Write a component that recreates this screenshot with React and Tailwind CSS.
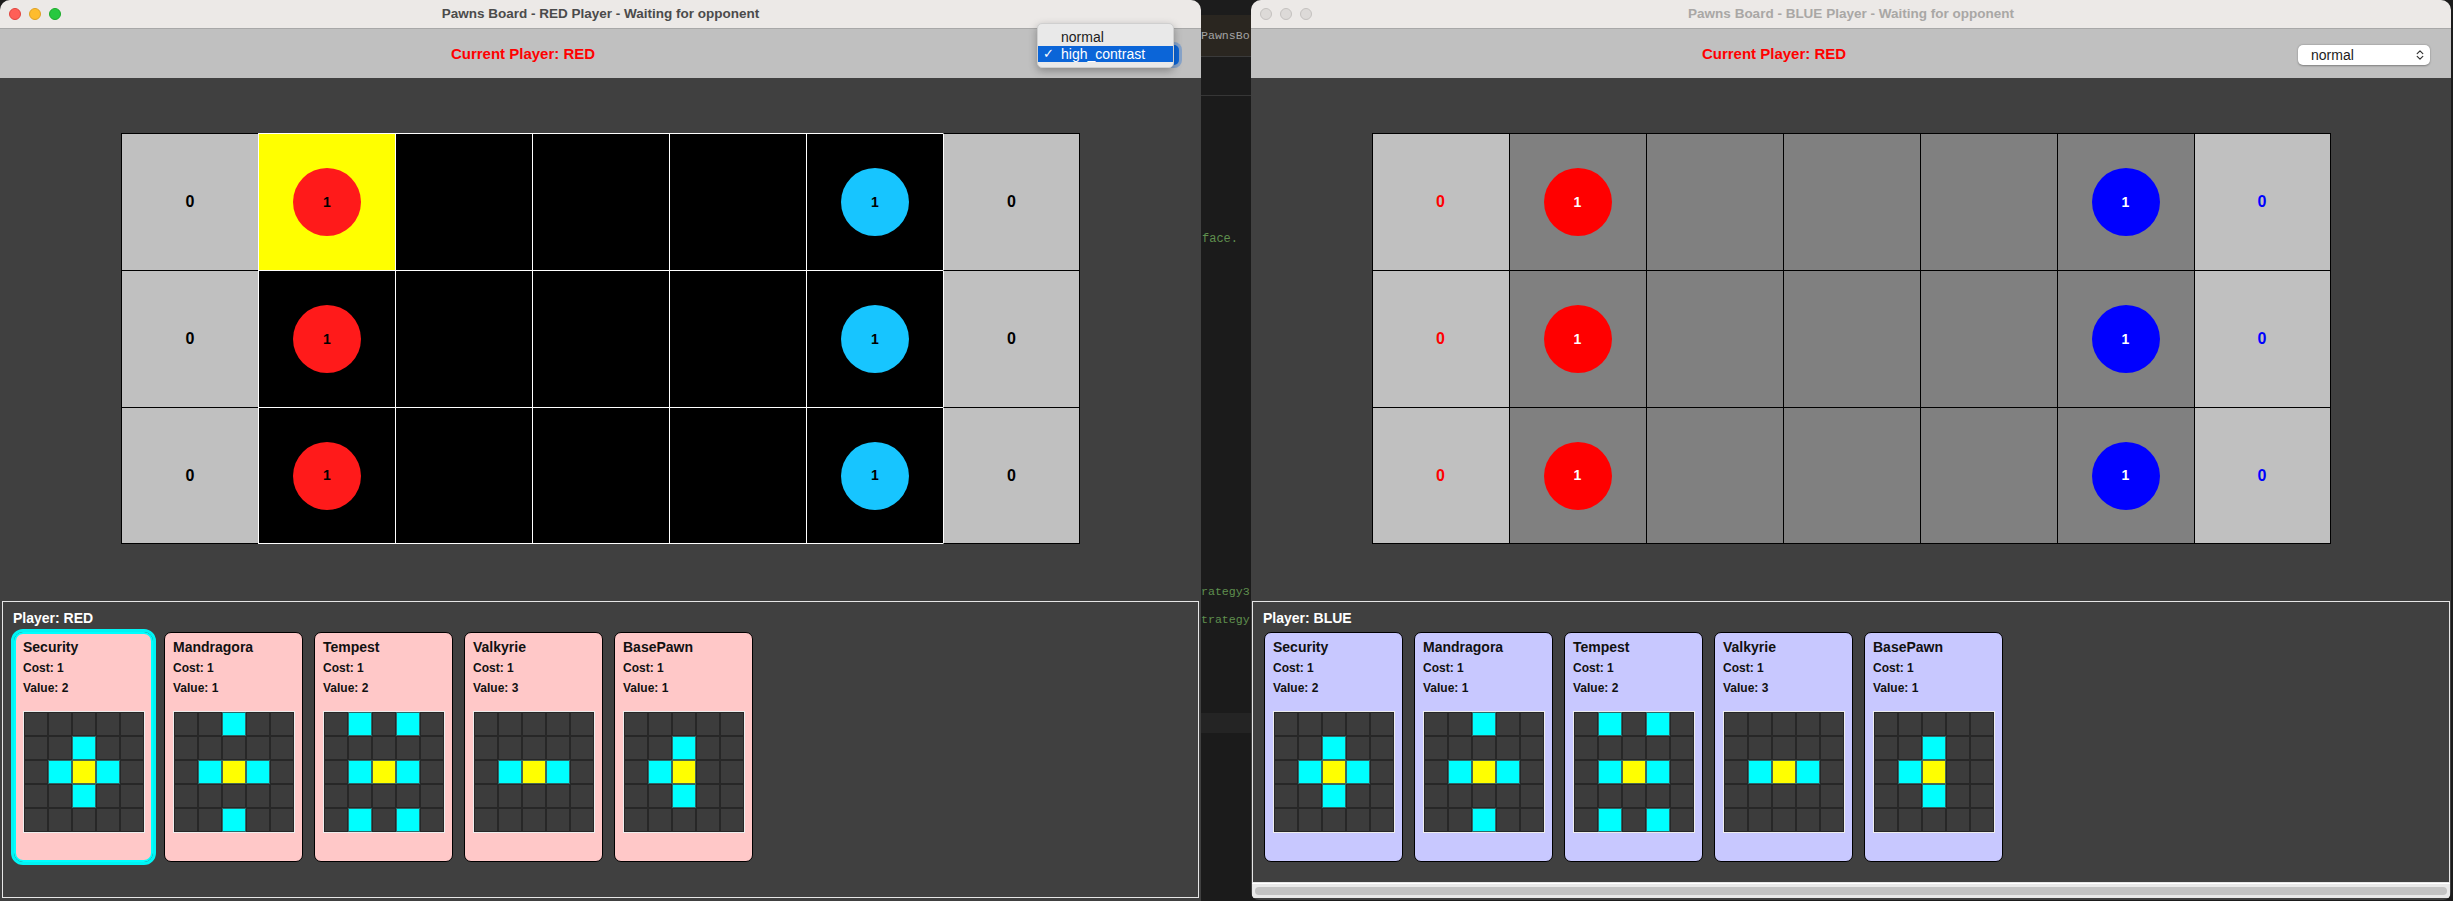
import React from "react";

const CARDS = [
  { name: "Security", cost: 1, value: 2, cells: [[1, 2], [2, 1], [2, 3], [3, 2]] },
  { name: "Mandragora", cost: 1, value: 1, cells: [[0, 2], [2, 1], [2, 3], [4, 2]] },
  { name: "Tempest", cost: 1, value: 2, cells: [[0, 1], [0, 3], [2, 1], [2, 3], [4, 1], [4, 3]] },
  { name: "Valkyrie", cost: 1, value: 3, cells: [[2, 1], [2, 3]] },
  { name: "BasePawn", cost: 1, value: 1, cells: [[1, 2], [2, 1], [3, 2]] },
];

function Chevrons({ className }) {
  return (
    <svg width="8" height="12" viewBox="0 0 8 12" className={className}>
      <path d="M1.2 4.6 L4 1.8 L6.8 4.6 M1.2 7.4 L4 10.2 L6.8 7.4" fill="none" stroke="currentColor" strokeWidth="1.2" strokeLinecap="round" strokeLinejoin="round" />
    </svg>
  );
}

function TitleBar({ active, title }) {
  return (
    <div className="grid grid-cols-[1fr_auto_1fr] items-center h-[29px] bg-[#ece9e7] border-b border-[#a8a8a8]">
      <div className="flex items-center gap-[8px] pl-[9px]">
        {active ? (
          <>
            <div className="w-[12px] h-[12px] rounded-full bg-[#ff5f57] border border-[#e0443e]" />
            <div className="w-[12px] h-[12px] rounded-full bg-[#febc2e] border border-[#dea123]" />
            <div className="w-[12px] h-[12px] rounded-full bg-[#28c840] border border-[#1aab29]" />
          </>
        ) : (
          <>
            <div className="w-[12px] h-[12px] rounded-full bg-[#dddad8] border border-[#c4c1bf]" />
            <div className="w-[12px] h-[12px] rounded-full bg-[#dddad8] border border-[#c4c1bf]" />
            <div className="w-[12px] h-[12px] rounded-full bg-[#dddad8] border border-[#c4c1bf]" />
          </>
        )}
      </div>
      <div className={`text-[13.5px] font-bold leading-[16px] ${active ? "text-[#4b4b4b]" : "text-[#a9a7a5]"}`}>{title}</div>
      <div />
    </div>
  );
}

function Header({ hc }) {
  return (
    <div className="flex h-[49px] bg-[#c0c0c0]">
      <div className="w-[1046px] flex items-center justify-center">
        <span className="text-[15px] font-bold text-[#ff0000] leading-[18px]">Current Player: RED</span>
      </div>
      <div className="pt-[16px] pl-[1px]">
        {hc ? (
          <div className="w-[132px] h-[20px] rounded-[5px] bg-[#0b65d8] shadow-[0_0_0_3px_rgba(90,140,210,0.55)] flex items-center justify-between pl-[13px] pr-[6px] text-white text-[14px]">
            <span>high_contrast</span>
            <Chevrons />
          </div>
        ) : (
          <div className="w-[132px] h-[20px] rounded-[5px] bg-white shadow-[0_0.5px_2px_rgba(0,0,0,0.35)] flex items-center justify-between pl-[13px] pr-[6px] text-[#1c1c1c] text-[14px]">
            <span>normal</span>
            <Chevrons className="text-[#333]" />
          </div>
        )}
      </div>
    </div>
  );
}

function Board({ hc }) {
  const rows = [0, 1, 2];
  const cols = [0, 1, 2, 3, 4, 5, 6];
  return (
    <div className="grid grid-cols-[repeat(7,137px)] grid-rows-[repeat(3,137px)]">
      {rows.map((r) =>
        cols.map((c) => {
          const lastCol = c === 6;
          const lastRow = r === 2;
          const isScore = c === 0 || c === 6;
          let cls = "border-l border-t flex items-center justify-center ";
          if (lastCol) cls += "border-r ";
          if (lastRow) cls += "border-b ";
          if (isScore) {
            cls += "bg-[#c0c0c0] border-black ";
            if (lastCol && hc) cls += "border-l-white ";
          } else if (hc) {
            cls += r === 0 && c === 1 ? "bg-[#ffff00] border-white " : "bg-black border-white ";
          } else {
            cls += "bg-[#808080] border-black ";
          }
          let content = null;
          if (isScore) {
            const color = hc ? "text-black" : c === 0 ? "text-[#ff0000]" : "text-[#0000ff]";
            content = <span className={`text-[16px] font-bold leading-none ${color}`}>0</span>;
          } else if (c === 1 || c === 5) {
            let circle;
            if (hc) circle = c === 1 ? "bg-[#ff1a1a] text-black" : "bg-[#17c5ff] text-black";
            else circle = c === 1 ? "bg-[#ff0000] text-white" : "bg-[#0000ff] text-white";
            content = (
              <div className={`w-[68px] h-[68px] rounded-full flex items-center justify-center text-[14px] font-bold ${circle}`}>1</div>
            );
          }
          return (
            <div key={`${r}-${c}`} className={cls}>
              {content}
            </div>
          );
        })
      )}
    </div>
  );
}

function MiniGrid({ cells }) {
  const set = new Set(cells.map(([r, c]) => `${r}-${c}`));
  const items = [];
  for (let r = 0; r < 5; r++) {
    for (let c = 0; c < 5; c++) {
      let cls = "bg-[#3c3c3c] border-[#272727]";
      if (r === 2 && c === 2) cls = "bg-[#ffff00] border-[#4a6a50]";
      else if (set.has(`${r}-${c}`)) cls = "bg-[#00ffff] border-[#2c6a6a]";
      items.push(<div key={`${r}-${c}`} className={`w-[24px] h-[24px] border ${cls}`} />);
    }
  }
  return <div className="grid grid-cols-[repeat(5,24px)] border border-[#ececec] w-fit">{items}</div>;
}

function Card({ card, blue, selected }) {
  const bg = blue ? "bg-[#c8c8ff]" : "bg-[#ffc8c8]";
  const frame = selected
    ? "border-[2px] border-[#00ffff] outline-[3px] outline-solid outline-[#00f4f4] rounded-[9px]"
    : "border border-black rounded-[7px]";
  return (
    <div className={`w-[139px] h-[230px] shrink-0 ${bg} ${frame} flex flex-col ${selected ? "pt-[5px] px-[7px]" : "pt-[6px] px-[8px]"}`}>
      <div className="text-[14px] font-bold leading-[17px] text-[#111]">{card.name}</div>
      <div className="text-[12px] font-bold leading-[20px] mt-[2px] text-[#111]">Cost: {card.cost}</div>
      <div className="text-[12px] font-bold leading-[20px] text-[#111]">Value: {card.value}</div>
      <div className="mt-[13px]">
        <MiniGrid cells={card.cells} />
      </div>
    </div>
  );
}

function Hand({ blue }) {
  return (
    <div className={`flex flex-col border border-[#e6e6e6] px-[10px] pt-[8px] ${blue ? "h-[282px] ml-[1px] mr-[1px]" : "h-[297px] ml-[2px] mr-[2px]"}`}>
      <div className="text-[14px] font-bold leading-[16px] text-white">Player: {blue ? "BLUE" : "RED"}</div>
      <div className="flex gap-[11px] mt-[6px] pl-[1px]">
        {CARDS.map((card, i) => (
          <Card key={card.name} card={card} blue={blue} selected={!blue && i === 0} />
        ))}
      </div>
    </div>
  );
}

function Popup() {
  return (
    <div className="absolute left-[1037px] top-[23px] w-[137px] h-[45px] bg-[#e9e9e9] border border-[#cfcfcf] rounded-[5px] shadow-[0_3px_8px_rgba(0,0,0,0.3)] pt-[5px] text-[14px]">
      <div className="h-[17px] pl-[23px] flex items-center text-[#1b1b1b]">normal</div>
      <div className="h-[16px] bg-[#0b65d8] flex items-center text-white">
        <span className="w-[23px] pl-[5px] text-[13px]">✓</span>
        <span>high_contrast</span>
      </div>
    </div>
  );
}

function Window({ hc }) {
  return (
    <div className={`relative flex flex-col bg-[#404040] rounded-t-[10px] overflow-hidden shrink-0 ${hc ? "w-[1201px] h-[901px]" : "w-[1200px] h-[900px] rounded-b-[8px]"}`}>
      <TitleBar active={hc} title={`Pawns Board - ${hc ? "RED" : "BLUE"} Player - Waiting for opponent`} />
      <Header hc={hc} />
      <div className="h-[523px] flex justify-center pt-[55px]">
        <Board hc={hc} />
      </div>
      <Hand blue={!hc} />
      {!hc && (
        <div className="h-[15px] bg-[#e9e9e9] border-t border-white mx-[1px] px-[3px] pt-[3px]">
          <div className="h-[8px] rounded-full bg-[#c3c3c3]" />
        </div>
      )}
      {hc && <Popup />}
    </div>
  );
}

function IdeStrip() {
  const mono = "font-['Liberation_Mono',monospace] leading-[18px] whitespace-nowrap";
  return (
    <div className="w-[50px] h-[901px] flex flex-col overflow-hidden shrink-0 bg-[#1b1b1b]">
      <div className="h-[15px] bg-[#1c1c1c]" />
      <div className={`h-[41px] bg-[#2a2620] flex items-center text-[#a3a3a3] text-[11.6px] ${mono}`}>PawnsBo</div>
      <div className="h-px bg-[#3a3a3a]" />
      <div className="h-[38px] bg-[#1c1c1c]" />
      <div className="h-px bg-[#363636]" />
      <div className="h-[134px]" />
      <div className={`h-[18px] pl-[1px] text-[#5f8f4e] text-[12px] ${mono}`}>face.</div>
      <div className="h-[335px]" />
      <div className={`h-[18px] text-[#5f8f4e] text-[11.6px] ${mono}`}>rategy3</div>
      <div className="h-[10px]" />
      <div className={`h-[18px] text-[#5f8f4e] text-[11.6px] ${mono}`}>trategy</div>
      <div className="h-[84px]" />
      <div className="h-[20px] bg-[#242424]" />
    </div>
  );
}

export default function App() {
  return (
    <div className="w-[2453px] h-[901px] flex bg-[#1b1b1b] overflow-hidden font-['Liberation_Sans',Arial,sans-serif]">
      <Window hc={true} />
      <IdeStrip />
      <Window hc={false} />
    </div>
  );
}
